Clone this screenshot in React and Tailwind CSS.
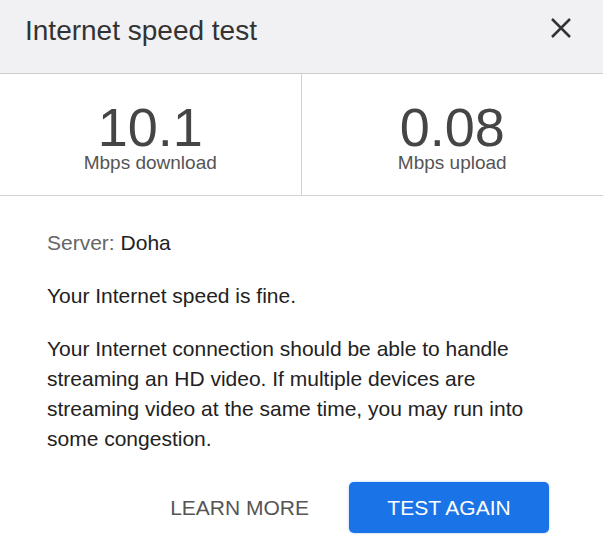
import React from 'react';

const stats = [
  { value: '10.1', label: 'Mbps download' },
  { value: '0.08', label: 'Mbps upload' }
];

const App = () => {
  return (
    <div className="w-[603px] h-[560px] bg-white font-['Liberation_Sans',Arial,sans-serif] overflow-hidden">
      {/* Header */}
      <div className="h-[74px] bg-[#f1f1f3] border-b border-[#cdcdcf] flex items-start justify-between pl-[25px] pr-[31px]">
        <h1 className="pt-[17px] text-[28px] leading-[28px] text-[#333]">Internet speed test</h1>
        <svg className="mt-[17px]" width="22" height="22" viewBox="0 0 22 22" fill="none" stroke="#333" strokeWidth="2.5" strokeLinecap="butt">
          <path d="M2 2 L20 20 M20 2 L2 20" />
        </svg>
      </div>

      {/* Stats */}
      <div className="grid grid-cols-2 h-[122px] border-b border-[#d2d2d2]">
        {stats.map((s, i) => (
          <div
            key={i}
            className={`flex flex-col items-center pt-[28px] ${i === 0 ? 'border-r border-[#d2d2d2]' : ''}`}
          >
            <div className="text-[54px] leading-[50px] text-[#454545]">{s.value}</div>
            <div className="mt-[1px] text-[19px] leading-[19px] text-[#555]">{s.label}</div>
          </div>
        ))}
      </div>

      {/* Body */}
      <div className="px-[47px] pt-[32px] text-[21px] leading-[30px] text-[#222]">
        <p>
          <span className="text-[#666]">Server: </span>Doha
        </p>
        <p className="mt-[23px]">Your Internet speed is fine.</p>
        <p className="mt-[23px]">
          Your Internet connection should be able to handle streaming an HD video. If multiple devices are streaming video at the same time, you may run into some congestion.
        </p>

        <div className="mt-[28px] flex items-center justify-end gap-[40px] pr-[7px]">
          <button className="text-[21px] leading-[21px] text-[#555]">LEARN MORE</button>
          <button className="w-[200px] h-[51px] rounded-[5px] bg-[#1b73e8] text-white text-[21px] leading-[21px] shadow-[0_0_2px_rgba(27,115,232,0.5)]">
            TEST AGAIN
          </button>
        </div>
      </div>
    </div>
  );
};

export default App;
